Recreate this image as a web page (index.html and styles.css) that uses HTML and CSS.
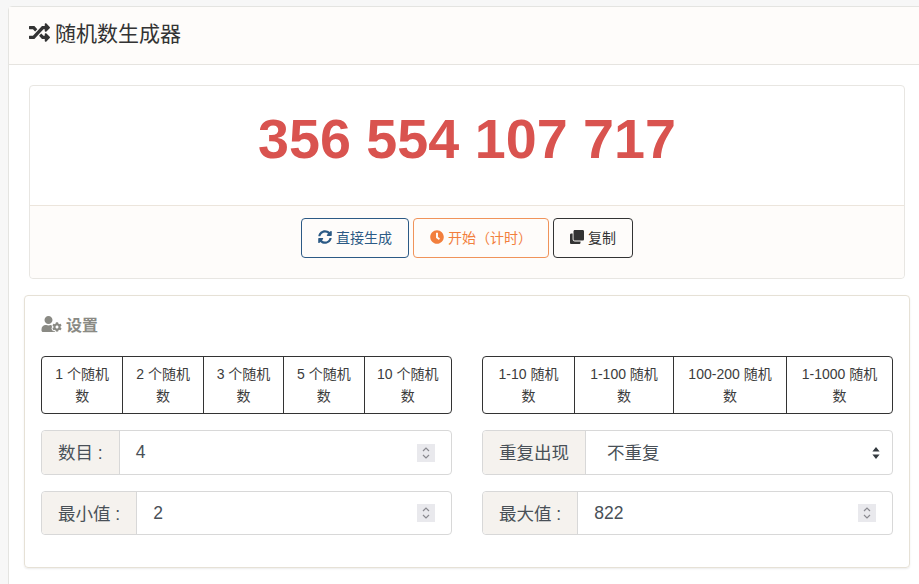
FILE: index.html
```html
<!DOCTYPE html>
<html>
<head>
    <title>随机数生成器</title>
    <meta charset="utf-8">
    <link rel="stylesheet" href="styles.css">
</head>
<body>
    <div class="panel">
        <div class="panel-head">
            <svg class="ico-shuffle" viewBox="0 0 512 512"><path d="M504.971 359.029c9.373 9.373 9.373 24.569 0 33.941l-80 79.984c-15.01 15.01-40.971 4.49-40.971-16.971V416h-58.785a12.004 12.004 0 0 1-8.773-3.812l-70.556-75.596 53.333-57.143L352 336h32v-39.981c0-21.438 25.943-31.998 40.971-16.971l80 79.981zM12 176h84l52.781 56.551 53.333-57.143-70.556-75.596A11.999 11.999 0 0 0 122.785 96H12c-6.627 0-12 5.373-12 12v56c0 6.627 5.373 12 12 12zm372 0v39.984c0 21.46 25.961 31.98 40.971 16.971l80-79.984c9.373-9.373 9.373-24.569 0-33.941l-80-79.981C409.943 24.021 384 34.582 384 56.019V96h-58.785a12.004 12.004 0 0 0-8.773 3.812L96 336H12c-6.627 0-12 5.373-12 12v56c0 6.627 5.373 12 12 12h110.785c3.326 0 6.503-1.381 8.773-3.812L352 176h32z"/></svg>
            <span>随机数生成器</span>
        </div>
        <div class="panel-body">
            <div class="result">
                <div class="result-num">356 554 107 717</div>
                <div class="result-foot">
                    <button class="btn btn-blue">
                        <svg class="ico" viewBox="0 0 512 512"><path d="M370.72 133.28C339.458 104.008 298.888 87.962 255.848 88c-77.458.068-144.328 53.178-162.791 126.85-1.344 5.363-6.122 9.15-11.651 9.15H24.103c-7.498 0-13.194-6.807-11.807-14.176C33.933 94.924 134.813 8 256 8c66.448 0 126.791 26.136 171.315 68.685L463.03 40.97C478.149 25.851 504 36.559 504 57.941V192c0 13.255-10.745 24-24 24H345.941c-21.382 0-32.09-25.851-16.971-40.971l41.75-41.749zM32 296h134.059c21.382 0 32.09 25.851 16.971 40.971l-41.75 41.75c31.262 29.273 71.835 45.319 114.876 45.28 77.418-.07 144.315-53.144 162.787-126.849 1.344-5.363 6.122-9.15 11.651-9.15h57.304c7.498 0 13.194 6.807 11.807 14.176C478.067 417.076 377.187 504 256 504c-66.448 0-126.791-26.136-171.315-68.685L48.97 471.03C33.851 486.149 8 475.441 8 454.059V320c0-13.255 10.745-24 24-24z"/></svg>
                        直接生成
                    </button>
                    <button class="btn btn-orange">
                        <svg class="ico" viewBox="0 0 512 512"><path d="M256 8C119 8 8 119 8 256s111 248 248 248 248-111 248-248S393 8 256 8zm57.1 350.1L224.9 294c-3.1-2.3-4.9-5.9-4.9-9.7V116c0-6.6 5.4-12 12-12h48c6.6 0 12 5.4 12 12v137.7l63.5 46.2c5.4 3.9 6.5 11.4 2.6 16.8l-28.2 38.8c-3.9 5.3-11.4 6.5-16.8 2.6z"/></svg>
                        开始（计时）
                    </button>
                    <button class="btn btn-dark">
                        <svg class="ico" viewBox="0 0 512 512"><path d="M464 0c26.51 0 48 21.49 48 48v288c0 26.51-21.49 48-48 48H176c-26.51 0-48-21.49-48-48V48c0-26.51 21.49-48 48-48h288M176 416c-44.112 0-80-35.888-80-80V128H48c-26.51 0-48 21.49-48 48v288c0 26.51 21.49 48 48 48h288c26.51 0 48-21.49 48-48v-48H176z"/></svg>
                        复制
                    </button>
                </div>
            </div>

            <div class="settings">
                <div class="settings-title">
                    <svg class="ico-cog" viewBox="0 0 640 512"><path d="M610.500 373.300c2.600-14.100 2.600-28.500 0-42.600l25.800-14.900c3-1.700 4.300-5.200 3.300-8.500-6.700-21.600-18.200-41.200-33.200-57.400-2.300-2.500-6-3.100-9-1.400l-25.800 14.900c-10.900-9.300-23.400-16.500-36.900-21.300v-29.800c0-3.400-2.400-6.400-5.700-7.100-22.300-5-45-4.800-66.200 0-3.300.7-5.700 3.700-5.700 7.100v29.800c-13.500 4.800-26 12-36.900 21.300l-25.800-14.900c-2.900-1.700-6.700-1.100-9 1.400-15 16.200-26.500 35.800-33.200 57.400-1 3.300.4 6.800 3.300 8.500l25.800 14.900c-2.600 14.100-2.600 28.500 0 42.600l-25.800 14.900c-3 1.700-4.300 5.200-3.300 8.500 6.700 21.600 18.200 41.100 33.200 57.400 2.300 2.500 6 3.100 9 1.400l25.800-14.900c10.900 9.300 23.400 16.500 36.900 21.300v29.800c0 3.400 2.400 6.400 5.700 7.100 22.300 5 45 4.800 66.200 0 3.300-.7 5.700-3.700 5.700-7.100v-29.800c13.500-4.800 26-12 36.900-21.300l25.800 14.900c2.900 1.700 6.700 1.100 9-1.400 15-16.200 26.500-35.800 33.200-57.400 1-3.300-.4-6.800-3.300-8.500l-25.800-14.900zM496 400.500c-26.800 0-48.500-21.800-48.500-48.500s21.800-48.500 48.500-48.500 48.500 21.800 48.500 48.500-21.700 48.500-48.500 48.500zM224 256c70.700 0 128-57.300 128-128S294.700 0 224 0 96 57.300 96 128s57.300 128 128 128zm201.200 226.500c-2.300-1.200-4.600-2.600-6.800-3.900l-7.900 4.600c-6 3.400-12.800 5.300-19.600 5.300-10.900 0-21.400-4.600-28.900-12.600-18.300-19.800-32.300-43.900-40.200-69.600-5.500-17.700 1.900-36.400 17.900-45.700l7.900-4.600c-.1-2.600-.1-5.200 0-7.800l-7.900-4.600c-16-9.200-23.400-28-17.900-45.700.9-2.900 2.200-5.800 3.200-8.700-3.800-.3-7.500-1.200-11.400-1.200h-16.700c-22.200 10.200-46.900 16-72.900 16s-50.600-5.800-72.900-16h-16.700C60.200 288 0 348.200 0 422.400V464c0 26.500 21.500 48 48 48h352c10.100 0 19.500-3.200 27.200-8.500-1.200-3.800-2-7.700-2-11.800v-9.200z"/></svg>
                    <span>设置</span>
                </div>
                <div class="cols">
                    <div class="col">
                        <div class="btn-group">
                            <button class="cell cell-n">1 个随机数</button>
                            <button class="cell cell-n">2 个随机数</button>
                            <button class="cell cell-n">3 个随机数</button>
                            <button class="cell cell-n">5 个随机数</button>
                            <button class="cell">10 个随机数</button>
                        </div>
                        <div class="field">
                            <span class="field-label">数目 :</span>
                            <div class="field-value"><span>4</span><i class="spin"><svg viewBox="0 0 18 18"><path d="M6 7l3-3 3 3M6 11l3 3 3-3"/></svg></i></div>
                        </div>
                        <div class="field field-short">
                            <span class="field-label">最小值 :</span>
                            <div class="field-value"><span>2</span><i class="spin"><svg viewBox="0 0 18 18"><path d="M6 7l3-3 3 3M6 11l3 3 3-3"/></svg></i></div>
                        </div>
                    </div>
                    <div class="col">
                        <div class="btn-group">
                            <button class="cell cell-a">1-10 随机数</button>
                            <button class="cell cell-b">1-100 随机数</button>
                            <button class="cell cell-c">100-200 随机数</button>
                            <button class="cell">1-1000 随机数</button>
                        </div>
                        <div class="field">
                            <span class="field-label">重复出现</span>
                            <div class="field-value field-select"><span>不重复</span><svg class="caret" viewBox="0 0 8 12"><path d="M4 0l3.600 4.600H.4zM4 12L.4 7.400h7.200z"/></svg></div>
                        </div>
                        <div class="field field-short">
                            <span class="field-label">最大值 :</span>
                            <div class="field-value"><span>822</span><i class="spin"><svg viewBox="0 0 18 18"><path d="M6 7l3-3 3 3M6 11l3 3 3-3"/></svg></i></div>
                        </div>
                    </div>
                </div>
            </div>
        </div>
    </div>
</body>
</html>
```

FILE: styles.css
```css
html, body {
    overflow: hidden;
}
body {
    margin: 0;
    height: 584px;
    background: #f7f7f7;
    color: #333;
    font-family: "Liberation Sans", "Noto Sans CJK SC", sans-serif;
    font-size: 14px;
}
button {
    font-family: inherit;
    cursor: pointer;
    background: none;
}
.panel {
    width: 917px;
    height: 600px;
    margin: 6px 0 0 8px;
    background: #fff;
    border: 1px solid #e4e4e1;
    border-radius: 4px;
    box-sizing: border-box;
}
.panel-head {
    display: flex;
    align-items: center;
    height: 58px;
    padding: 0 0 8px 20px;
    box-sizing: border-box;
    background: #fefcfa;
    border-bottom: 1px solid #e6e4e0;
    font-size: 21px;
    color: #333;
}
.ico-shuffle {
    width: 21px;
    height: 21px;
    margin: 1px 5px 0 0;
    fill: #333;
}
.panel-body {
    padding: 20px 15px 0;
}
.result {
    margin: 0 5px;
    width: 876px;
    box-sizing: border-box;
    border: 1px solid #e8e6e2;
    border-radius: 4px;
}
.result-num {
    height: 119px;
    line-height: 106px;
    text-align: center;
    font-size: 55.7px;
    font-weight: bold;
    color: #d9534f;
}
.result-foot {
    display: flex;
    justify-content: center;
    gap: 4px;
    height: 73px;
    padding-top: 12px;
    box-sizing: border-box;
    background: #fefcfa;
    border-top: 1px solid #ece5dc;
    border-radius: 0 0 4px 4px;
}
.btn {
    display: flex;
    align-items: center;
    justify-content: center;
    height: 40px;
    padding: 0 0 2px;
    font-size: 14px;
    background: transparent;
    border: 1px solid #333;
    border-radius: 4px;
}
.ico {
    width: 14px;
    height: 14px;
    margin-right: 4px;
    fill: currentColor;
}
.btn-blue {
    width: 108px;
    color: #2c5a85;
    border-color: #2c5a85;
}
.btn-orange {
    width: 136px;
    color: #f27f3d;
    border-color: #f0935a;
}
.btn-dark {
    width: 80px;
    color: #333;
}
.settings {
    width: 886px;
    height: 273px;
    margin-top: 16px;
    padding: 0 16px;
    box-sizing: border-box;
    border: 1px solid #e6e1d6;
    border-radius: 4px;
    box-shadow: 0 1px 2px rgba(0,0,0,.08);
}
.settings-title {
    display: flex;
    align-items: center;
    height: 60px;
    padding-bottom: 4px;
    box-sizing: border-box;
    font-size: 16px;
    font-weight: bold;
    color: #8a8a84;
}
.ico-cog {
    width: 21px;
    height: 16px;
    margin-right: 4px;
    fill: #8a8a84;
}
.cols {
    display: flex;
    gap: 30px;
}
.col {
    width: 411px;
}
.btn-group {
    display: flex;
    height: 58px;
    box-sizing: border-box;
    border: 1px solid #333;
    border-radius: 4px;
}
.cell {
    flex: 1 1 0;
    padding: 0 10px;
    border: 0;
    border-left: 1px solid #333;
    font-size: 14px;
    line-height: 22px;
    color: #3c3c3c;
}
.cell:first-child {
    border-left: 0;
}
.cell-n { flex: 0 0 80.4px; }
.cell-a { flex: 0 0 91px; }
.cell-b { flex: 0 0 99px; }
.cell-c { flex: 0 0 113px; }
.field {
    display: flex;
    height: 45px;
    margin-top: 16px;
    box-sizing: border-box;
    border: 1px solid #d8d8d8;
    border-radius: 4px;
    font-size: 17.5px;
    color: #495057;
}
.field-short {
    height: 44px;
}
.field-label {
    display: flex;
    align-items: center;
    padding: 0 16px 2px;
    background: #f5f2ee;
    border-right: 1px solid #d8d8d8;
    border-radius: 4px 0 0 4px;
    white-space: nowrap;
}
.field-value {
    flex: 1;
    display: flex;
    align-items: center;
    justify-content: space-between;
    padding: 0 16px;
}
.field-select {
    padding-left: 21px;
    padding-right: 12px;
}
.field-select span {
    padding-bottom: 2px;
}
.caret {
    width: 8px;
    height: 12px;
    fill: #343a40;
}
.spin {
    display: block;
    width: 18px;
    height: 18px;
    background: #e9e9ed;
}
.spin svg {
    display: block;
    fill: none;
    stroke: #8a8a90;
    stroke-width: 1.2;
}
```
